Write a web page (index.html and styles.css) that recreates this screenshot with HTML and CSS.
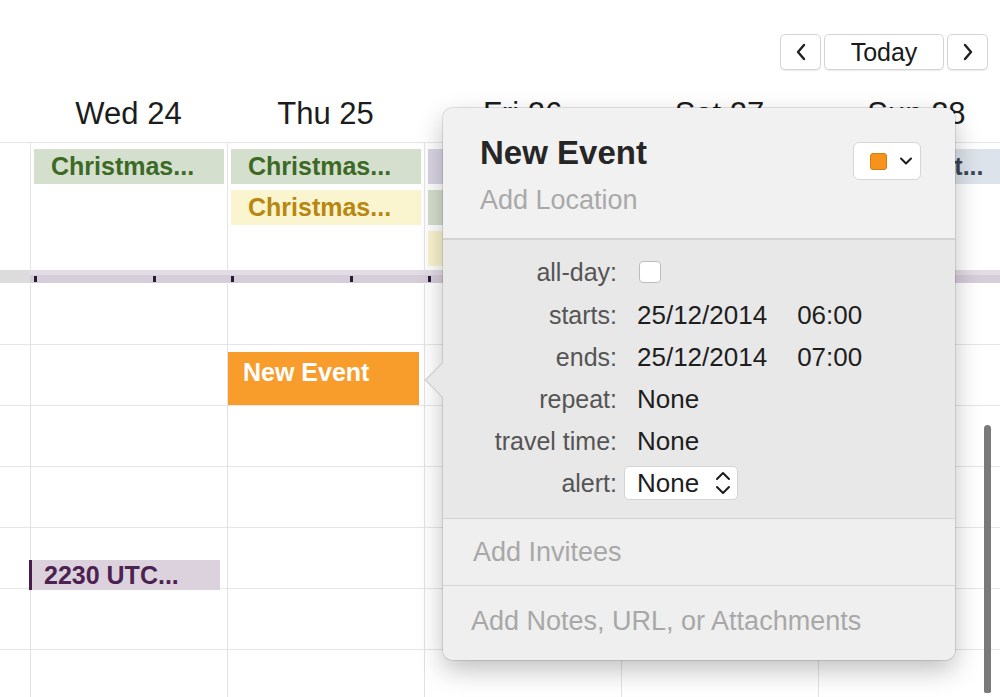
FILE: index.html
```html
<!DOCTYPE html>
<html>
<head>
<meta charset="utf-8">
<link rel="stylesheet" href="styles.css">
</head>
<body>
<div class="cal">
  <header class="toolbar">
    <div class="nav">
      <button class="btn btn-arrow"><svg width="12" height="18" viewBox="0 0 12 18"><polyline points="9,2 3,9 9,16" fill="none" stroke="#1f1f1f" stroke-width="2.4" stroke-linecap="round" stroke-linejoin="round"/></svg></button>
      <button class="btn btn-today">Today</button>
      <button class="btn btn-arrow"><svg width="12" height="18" viewBox="0 0 12 18"><polyline points="3,2 9,9 3,16" fill="none" stroke="#1f1f1f" stroke-width="2.4" stroke-linecap="round" stroke-linejoin="round"/></svg></button>
    </div>
  </header>

  <div class="days">
    <div class="gutter"></div>
    <div class="day">Wed 24</div>
    <div class="day">Thu 25</div>
    <div class="day">Fri 26</div>
    <div class="day">Sat 27</div>
    <div class="day">Sun 28</div>
  </div>

  <div class="allday">
    <div class="gutter"></div>
    <div class="adcol">
      <div class="ev ev-green">Christmas...</div>
    </div>
    <div class="adcol">
      <div class="ev ev-green">Christmas...</div>
      <div class="ev ev-yellow">Christmas...</div>
    </div>
    <div class="adcol">
      <div class="ev ev-purple ev-short">A...</div>
      <div class="ev ev-green ev-short">E...</div>
      <div class="ev ev-yellow ev-short">E...</div>
    </div>
    <div class="adcol"></div>
    <div class="adcol">
      <div class="ev ev-blue">Concert at...</div>
    </div>
  </div>

  <div class="divider">
    <div class="gutter"></div>
    <div class="dvcol"><span class="tick"></span><span class="tick"></span></div>
    <div class="dvcol"><span class="tick"></span><span class="tick"></span></div>
    <div class="dvcol"><span class="tick"></span><span class="tick"></span></div>
    <div class="dvcol"><span class="tick"></span><span class="tick"></span></div>
    <div class="dvcol"><span class="tick"></span><span class="tick"></span></div>
  </div>

  <div class="grid">
    <div class="gcol gutter-col">
      <div class="hour"></div><div class="hour"></div><div class="hour"></div><div class="hour"></div><div class="hour"></div><div class="hour"></div><div class="hour"></div>
    </div>
    <div class="gcol tcol">
      <div class="hour"></div><div class="hour"></div><div class="hour"></div><div class="hour"></div><div class="hour"></div><div class="hour"></div><div class="hour"></div>
      <div class="tev tev-purple" style="top:276px;height:30px;">2230 UTC...</div>
    </div>
    <div class="gcol tcol">
      <div class="hour"></div><div class="hour"></div><div class="hour"></div><div class="hour"></div><div class="hour"></div><div class="hour"></div><div class="hour"></div>
      <div class="tev tev-orange" style="top:68px;height:53px;">New Event</div>
    </div>
    <div class="gcol tcol">
      <div class="hour"></div><div class="hour"></div><div class="hour"></div><div class="hour"></div><div class="hour"></div><div class="hour"></div><div class="hour"></div>
    </div>
    <div class="gcol tcol">
      <div class="hour"></div><div class="hour"></div><div class="hour"></div><div class="hour"></div><div class="hour"></div><div class="hour"></div><div class="hour"></div>
    </div>
    <div class="gcol tcol">
      <div class="hour"></div><div class="hour"></div><div class="hour"></div><div class="hour"></div><div class="hour"></div><div class="hour"></div><div class="hour"></div>
    </div>
  </div>

  <div class="scrollbar"></div>

  <div class="popover">
    <div class="pop-head">
      <div class="head-text">
        <div class="title">New Event</div>
        <div class="location">Add Location</div>
      </div>
      <div class="color-btn">
        <span class="swatch"></span>
        <svg width="14" height="10" viewBox="0 0 14 10"><polyline points="2,2.5 7,7.5 12,2.5" fill="none" stroke="#1c1c1c" stroke-width="2" stroke-linecap="round" stroke-linejoin="round"/></svg>
      </div>
    </div>
    <div class="pop-form">
      <div class="row row-first">
        <div class="label">all-day:</div>
        <div class="value"><span class="checkbox"></span></div>
      </div>
      <div class="row">
        <div class="label">starts:</div>
        <div class="value dt"><span>25/12/2014</span><span>06:00</span></div>
      </div>
      <div class="row">
        <div class="label">ends:</div>
        <div class="value dt"><span>25/12/2014</span><span>07:00</span></div>
      </div>
      <div class="row">
        <div class="label">repeat:</div>
        <div class="value">None</div>
      </div>
      <div class="row">
        <div class="label">travel time:</div>
        <div class="value">None</div>
      </div>
      <div class="row">
        <div class="label">alert:</div>
        <div class="value">
          <div class="select">
            <span>None</span>
            <svg width="18" height="28" viewBox="0 0 18 28"><polyline points="3,10 9,4 15,10" fill="none" stroke="#1c1c1c" stroke-width="2" stroke-linecap="round" stroke-linejoin="round"/><polyline points="3,18 9,24 15,18" fill="none" stroke="#1c1c1c" stroke-width="2" stroke-linecap="round" stroke-linejoin="round"/></svg>
          </div>
        </div>
      </div>
    </div>
    <div class="pop-sec invitees">Add Invitees</div>
    <div class="pop-sec notes">Add Notes, URL, or Attachments</div>
  </div>
</div>
</body>
</html>
```

FILE: styles.css
```css
html, body {
  margin: 0;
  padding: 0;
  background: #ffffff;
}
body {
  font-family: "Liberation Sans", Arial, Helvetica, sans-serif;
  overflow: hidden;
}
.cal {
  position: relative;
  width: 1000px;
  height: 697px;
  overflow: hidden;
}

/* toolbar */
.toolbar {
  height: 85px;
  box-sizing: border-box;
  padding: 34px 12px 0 0;
  display: flex;
  justify-content: flex-end;
  align-items: flex-start;
}
.nav {
  display: flex;
  gap: 3px;
}
.btn {
  height: 36px;
  padding: 0;
  background: #ffffff;
  border: 1px solid #d4d4d4;
  border-radius: 5px;
  box-shadow: 0 1px 1px rgba(0,0,0,0.08);
  font-family: "Liberation Sans", Arial, sans-serif;
  font-size: 25px;
  color: #1a1a1a;
  display: flex;
  align-items: center;
  justify-content: center;
}
.btn-arrow { width: 41px; }
.btn-today { width: 120px; }

/* day header */
.days {
  display: grid;
  grid-template-columns: 30px repeat(5, 197px);
  height: 57px;
  border-bottom: 1px solid #e6e6e6;
}
.day {
  font-size: 31px;
  color: #1c1c1c;
  text-align: center;
  line-height: 57px;
  white-space: nowrap;
}

/* all-day */
.allday {
  display: grid;
  grid-template-columns: 30px repeat(5, 197px);
  height: 127px;
}
.adcol {
  border-left: 1px solid #e4e4e4;
  padding: 6px 3px 0 3px;
  display: flex;
  flex-direction: column;
  gap: 6px;
}
.ev {
  height: 35px;
  line-height: 35px;
  padding-left: 17px;
  font-size: 25px;
  font-weight: bold;
  white-space: nowrap;
  overflow: hidden;
}
.ev-short { padding-left: 15px; }
.ev-green { background: #d5dfcd; color: #3c6a26; }
.ev-yellow { background: #faf4cf; color: #b8870f; }
.ev-purple { background: #dad5e3; color: #3a2c60; }
.ev-blue { background: #dde3ea; color: #3b4756; }

/* divider */
.divider {
  display: grid;
  grid-template-columns: 30px repeat(5, 197px);
  height: 13px;
  background: linear-gradient(#e2dce4 0, #e2dce4 5px, #d6cdda 5px, #d6cdda 13px);
  margin-bottom: 1px;
}
.divider .gutter {
  background: #dcdcdc;
}
.dvcol {
  display: flex;
  align-items: flex-end;
  gap: 116px;
  padding: 0 0 1px 4px;
}
.tick {
  width: 3px;
  height: 6px;
  background: #2b1a33;
}

/* time grid */
.grid {
  display: grid;
  grid-template-columns: 30px repeat(5, 197px);
}
.gcol {
  position: relative;
}
.tcol {
  border-left: 1px solid #e2e2e2;
}
.hour {
  height: 60px;
  border-bottom: 1px solid #e6e6e6;
}
.tev {
  position: absolute;
  left: 0;
  right: 5px;
  box-sizing: border-box;
  font-size: 25px;
  font-weight: bold;
  white-space: nowrap;
  overflow: hidden;
}
.tev-orange {
  background: #f89c2c;
  color: #ffffff;
  padding: 5px 0 0 15px;
  line-height: 30px;
  right: 5px;
}
.tev-purple {
  background: #dbd2de;
  color: #4c2250;
  border-left: 3px solid #4a1b4e;
  padding-left: 12px;
  line-height: 30px;
  left: -2px;
  right: 7px;
}

/* scrollbar */
.scrollbar {
  position: absolute;
  left: 984px;
  top: 425px;
  width: 7px;
  height: 268px;
  border-radius: 4px 4px 2px 2px;
  background: #7a7a7a;
}

/* popover */
.popover {
  position: absolute;
  left: 443px;
  top: 108px;
  width: 512px;
  height: 552px;
  background: #efefef;
  border-radius: 10px;
  box-shadow: 0 0 0 1px rgba(0,0,0,0.10), 0 10px 26px rgba(0,0,0,0.25);
  display: flex;
  flex-direction: column;
}
.popover::before {
  content: "";
  position: absolute;
  left: -13px;
  top: 259px;
  width: 26px;
  height: 26px;
  background: #e8e8e8;
  border-left: 1px solid rgba(0,0,0,0.13);
  border-bottom: 1px solid rgba(0,0,0,0.13);
  box-sizing: border-box;
  transform: rotate(45deg);
}
.pop-head {
  position: relative;
  height: 132px;
  box-sizing: border-box;
  padding: 26px 34px 0 37px;
  background: #f1f1f1;
  border-radius: 10px 10px 0 0;
  border-bottom: 2px solid #d3d3d3;
  display: flex;
  justify-content: space-between;
  align-items: flex-start;
}
.title {
  font-size: 33px;
  font-weight: bold;
  color: #262626;
  line-height: 38px;
}
.location {
  margin-top: 12px;
  font-size: 27px;
  line-height: 32px;
  color: #a9a9a9;
}
.color-btn {
  margin-top: 8px;
  width: 68px;
  height: 38px;
  box-sizing: border-box;
  background: #ffffff;
  border: 1px solid #d6d6d6;
  border-radius: 6px;
  display: flex;
  align-items: center;
  padding-left: 16px;
  gap: 12px;
}
.swatch {
  width: 17px;
  height: 17px;
  box-sizing: border-box;
  background: #f7931c;
  border: 1px solid #d67a0e;
  border-radius: 3px;
}

.pop-form {
  position: relative;
  height: 279px;
  box-sizing: border-box;
  padding-top: 10px;
  background: #e8e8e8;
  border-bottom: 1px solid #d4d4d4;
}
.row {
  display: grid;
  grid-template-columns: 174px 1fr;
  column-gap: 20px;
  align-items: center;
  height: 42px;
}
.row-first { height: 44px; }
.label {
  text-align: right;
  font-size: 25px;
  color: #555555;
  white-space: nowrap;
}
.value {
  font-size: 26px;
  color: #1e1e1e;
  display: flex;
  align-items: center;
  white-space: nowrap;
}
.dt { gap: 30px; }
.checkbox {
  margin-left: 2px;
  width: 22px;
  height: 22px;
  box-sizing: border-box;
  background: #ffffff;
  border: 1px solid #bdbdbd;
  border-radius: 4px;
}
.select {
  margin-left: -13px;
  width: 114px;
  height: 34px;
  box-sizing: border-box;
  background: #ffffff;
  border: 1px solid #d4d4d4;
  border-radius: 5px;
  display: flex;
  align-items: center;
  justify-content: space-between;
  padding: 0 5px 0 12px;
}

.pop-sec {
  position: relative;
  box-sizing: border-box;
  background: #efefef;
  font-size: 27px;
  color: #a8a8a8;
  display: flex;
  align-items: center;
  white-space: nowrap;
}
.invitees {
  height: 67px;
  padding-left: 30px;
  border-bottom: 1px solid #d6d6d6;
}
.notes {
  flex: 1;
  padding: 0 0 4px 28px;
  border-radius: 0 0 10px 10px;
}
```
